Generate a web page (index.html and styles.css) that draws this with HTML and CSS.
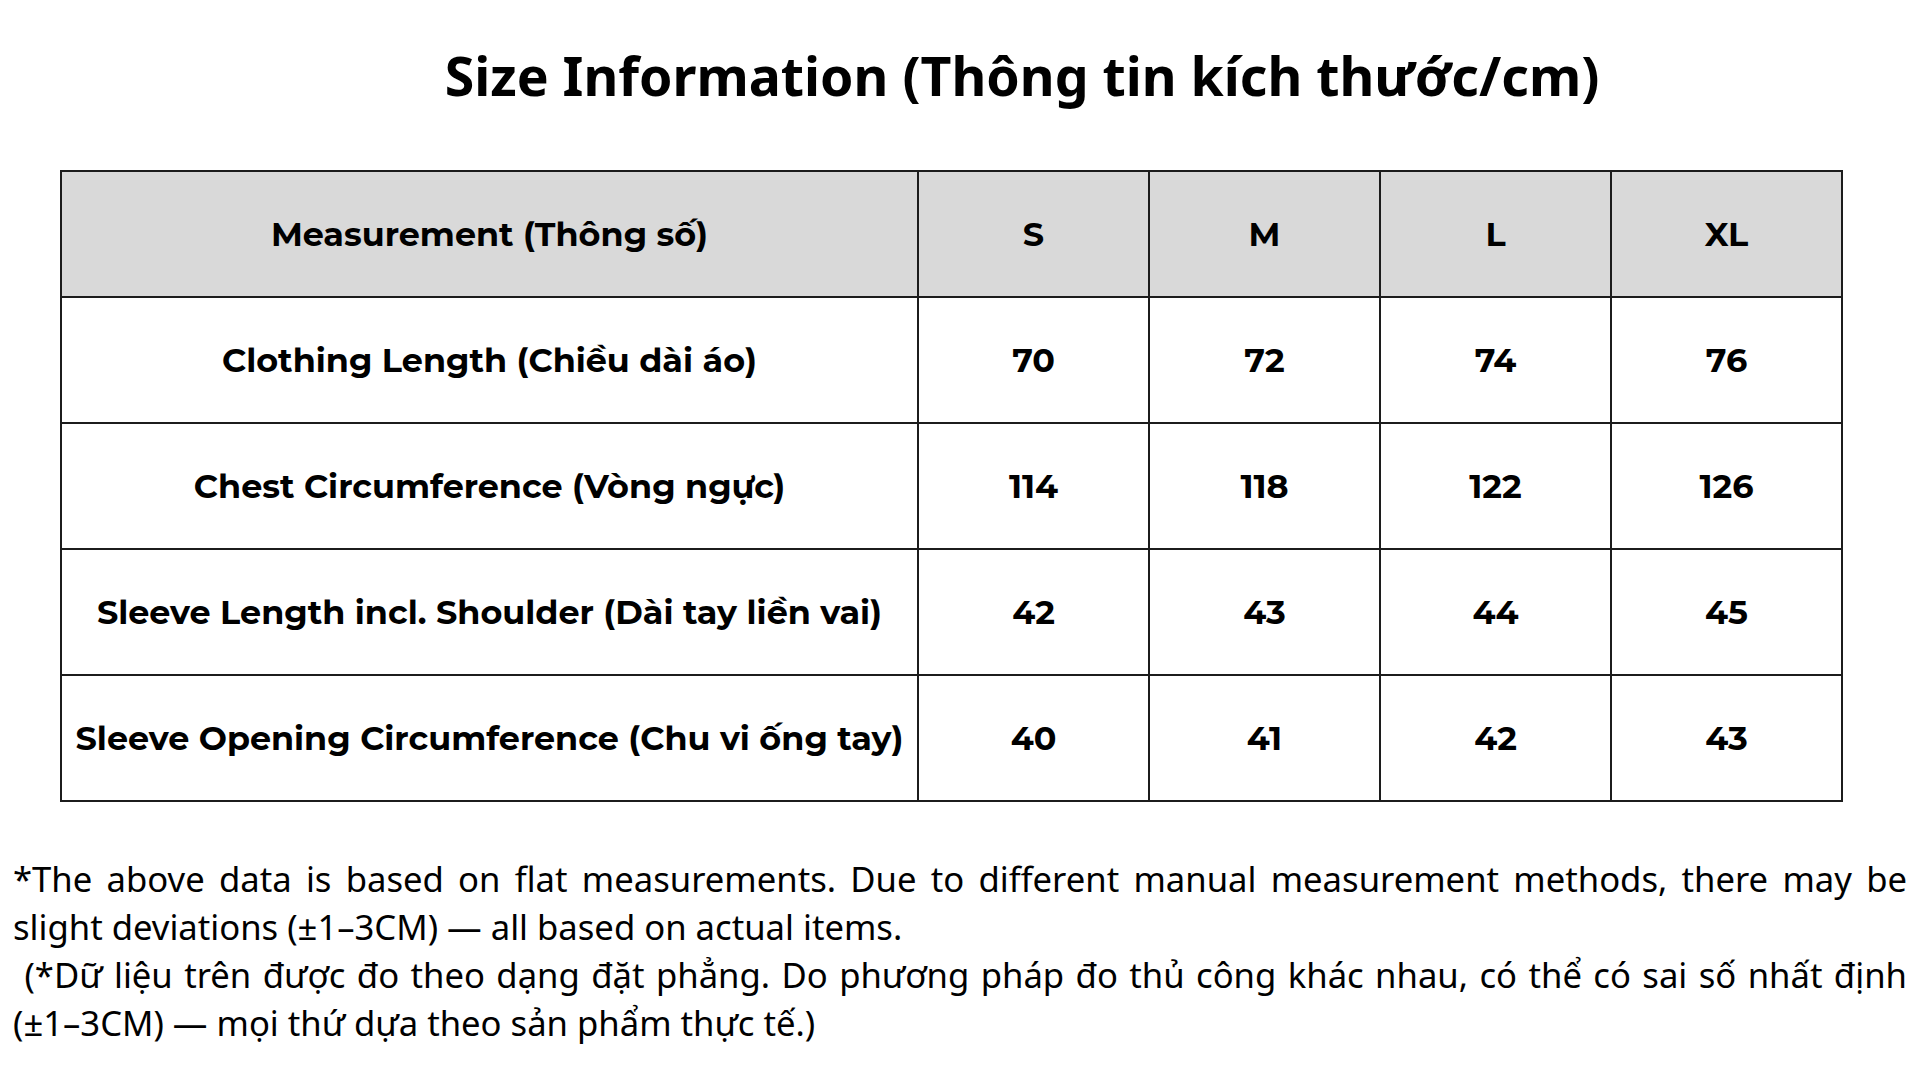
FILE: index.html
```html
<!DOCTYPE html>
<html lang="vi">
<head>
<meta charset="utf-8">
<title>Size Information</title>
<link rel="stylesheet" href="styles.css">
</head>
<body>
<div class="page">
  <h1 class="title">Size Information (Thông tin kích thước/cm)</h1>
  <table class="size-table">
    <colgroup>
      <col class="col-name">
      <col class="col-size">
      <col class="col-size">
      <col class="col-size">
      <col class="col-size">
    </colgroup>
    <thead>
      <tr>
        <th>Measurement (Thông số)</th>
        <th>S</th>
        <th>M</th>
        <th>L</th>
        <th>XL</th>
      </tr>
    </thead>
    <tbody>
      <tr>
        <td>Clothing Length (Chiều dài áo)</td>
        <td>70</td><td>72</td><td>74</td><td>76</td>
      </tr>
      <tr>
        <td>Chest Circumference (Vòng ngực)</td>
        <td>114</td><td>118</td><td>122</td><td>126</td>
      </tr>
      <tr>
        <td>Sleeve Length incl. Shoulder (Dài tay liền vai)</td>
        <td>42</td><td>43</td><td>44</td><td>45</td>
      </tr>
      <tr>
        <td>Sleeve Opening Circumference (Chu vi ống tay)</td>
        <td>40</td><td>41</td><td>42</td><td>43</td>
      </tr>
    </tbody>
  </table>
  <p class="note">*The above data is based on flat measurements. Due to different manual measurement methods, there may be slight deviations (±1–3CM) — all based on actual items.<br>&nbsp;(*Dữ liệu trên được đo theo dạng đặt phẳng. Do phương pháp đo thủ công khác nhau, có thể có sai số nhất định (±1–3CM) — mọi thứ dựa theo sản phẩm thực tế.)</p>
</div>
</body>
</html>
```

FILE: styles.css
```css
html, body {
  margin: 0;
  padding: 0;
  background: #ffffff;
}

.page {
  width: 1920px;
  height: 1080px;
  overflow: hidden;
  color: #000;
}

.title {
  margin: 38px 0 0 0;
  padding-left: 124px;
  text-align: center;
  font-family: "Noto Sans", "Open Sans", sans-serif;
  font-weight: 700;
  font-size: 53.6px;
  line-height: 76px;
}

.size-table {
  margin: 56px 0 0 60px;
  border-collapse: collapse;
  table-layout: fixed;
  width: 1782px;
  font-family: "Montserrat", "Inter", "Lato", sans-serif;
  font-weight: 700;
  font-size: 33.4px;
}

.col-name { width: 857px; }
.col-size { width: 231px; }

.size-table th,
.size-table td {
  border: 2px solid #1c1c1c;
  height: 124.1px;
  padding: 0;
  text-align: center;
  vertical-align: middle;
  white-space: nowrap;
}

.size-table thead th {
  background: #d9d9d9;
  font-weight: 700;
}

.note {
  margin: 53px 0 0 0;
  padding: 0 13px;
  font-family: "Noto Sans", "Open Sans", sans-serif;
  font-size: 34.65px;
  line-height: 48px;
  text-align: justify;
}
```
